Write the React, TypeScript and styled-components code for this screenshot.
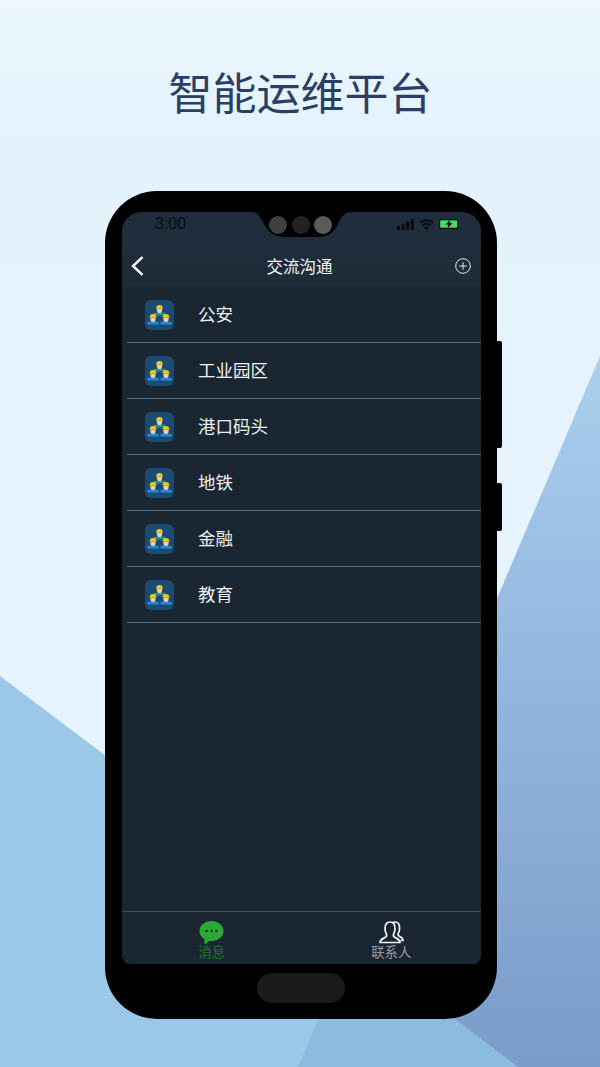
import React from 'react';
import styled, { createGlobalStyle } from 'styled-components';

const GlobalStyle = createGlobalStyle`
  html, body {
    margin: 0;
    padding: 0;
    background: #e8f4fd;
  }
  body {
    font-family: "Noto Sans CJK SC", "Noto Sans", sans-serif;
  }
`;

const Page = styled.div`
  position: relative;
  width: 600px;
  height: 1067px;
  overflow: hidden;
  display: flex;
  flex-direction: column;
  align-items: center;
  background: linear-gradient(180deg, #ecf7fe 0%, #e3f2fc 14%, #e8f4fd 60%);
`;

const RightSlope = styled.div`
  position: absolute;
  inset: 0;
  clip-path: polygon(600px 356px, 298px 1067px, 600px 1067px);
  background: linear-gradient(180deg, #a9d0ee 356px, #98bce2 600px, #7b9bc9 1067px);
`;

const LeftSlope = styled.div`
  position: absolute;
  inset: 0;
  clip-path: polygon(0 676px, 518px 1067px, 0 1067px);
  background: #9bc8e8;
`;

const SlopeOverlap = styled.div`
  position: absolute;
  inset: 0;
  clip-path: polygon(351px 940px, 298px 1067px, 518px 1067px);
  background: #8bbce0;
`;

const Title = styled.h1`
  position: relative;
  margin: 0 0 0 1px;
  padding-top: 59px;
  height: 191px;
  box-sizing: border-box;
  font-size: 44px;
  line-height: 64px;
  font-weight: 400;
  color: #2a3e66;
`;

const Phone = styled.div`
  position: relative;
  width: 392px;
  height: 828px;
  margin-left: 2px;
  box-sizing: border-box;
  padding: 21px 16px 55px 17px;
  background: #000;
  border-radius: 52px;
`;

const SideButton = styled.div<{ $top: number; $height: number }>`
  position: absolute;
  right: -5px;
  top: ${(p) => p.$top}px;
  width: 5px;
  height: ${(p) => p.$height}px;
  background: #000;
  border-radius: 0 2px 2px 0;
`;

const HomeButton = styled.div`
  position: absolute;
  left: 152px;
  bottom: 16px;
  width: 88px;
  height: 30px;
  background: #1a1a1a;
  border-radius: 15px;
`;

const Screen = styled.div`
  position: relative;
  height: 100%;
  display: flex;
  flex-direction: column;
  overflow: hidden;
  background: #1a2732;
  border-radius: 20px 20px 8px 8px;
`;

const Notch = styled.svg`
  position: absolute;
  left: 130px;
  top: 0;
`;

const TopArea = styled.div`
  height: 75px;
  flex: none;
  display: flex;
  flex-direction: column;
  background: linear-gradient(180deg, #202d3c 0%, #1e2b39 100%);
`;

const StatusBar = styled.div`
  height: 24px;
  padding: 0 20px 0 33px;
  display: flex;
  align-items: center;
  justify-content: space-between;
`;

const Time = styled.span`
  font-family: "Liberation Sans", sans-serif;
  font-size: 16px;
  line-height: 22px;
  color: #0a0c10;
`;

const StatusIcons = styled.div`
  display: flex;
  align-items: center;
  gap: 5px;
`;

const NavBar = styled.div`
  flex: 1;
  display: flex;
  align-items: center;
  justify-content: space-between;
  padding: 8px 10px 0 9px;
`;

const NavTitle = styled.span`
  font-size: 16.5px;
  line-height: 22px;
  color: #f2f4f6;
`;

const GroupList = styled.div`
  flex: 1;
  display: flex;
  flex-direction: column;
  padding-left: 5px;
`;

const GroupRow = styled.div`
  height: 56px;
  box-sizing: border-box;
  display: flex;
  align-items: center;
  gap: 24px;
  padding-left: 18px;
  border-bottom: 1px solid #5f666d;
`;

const GroupName = styled.span`
  font-size: 17.5px;
  line-height: 22px;
  margin-top: -1px;
  color: #eef0f2;
`;

const TabBar = styled.div`
  height: 53px;
  flex: none;
  display: grid;
  grid-template-columns: 1fr 1fr;
  border-top: 1px solid #454c58;
  box-sizing: border-box;
`;

const Tab = styled.div`
  display: flex;
  flex-direction: column;
  align-items: center;
  padding-top: 9px;
`;

const TabLabel = styled.span<{ $active?: boolean }>`
  font-size: 13.3px;
  line-height: 15px;
  margin-top: -1px;
  color: ${(p) => (p.$active ? '#1f7a2c' : '#9a9da0')};
`;

const Worker = ({ x, y }: { x: number; y: number }) => (
  <g transform={`translate(${x} ${y})`}>
    <rect x="-5.5" y="7.8" width="11" height="2.6" rx="0.5" fill="#1f8ee0" />
    <path d="M-2.8 3.4h5.6l-.5 3.300-1 1.300h-2.600l-1-1.300z" fill="#e9cfa6" />
    <path d="M-3.400 3.600c0-2.500 1.400-3.600 3.400-3.600s3.400 1.100 3.400 3.600z" fill="#f6c91e" />
  </g>
);

const GroupIcon = () => (
  <svg width="29" height="30" viewBox="0 0 29 30">
    <rect width="29" height="30" rx="6" fill="#1c4a70" />
    <Worker x={14.5} y={5} />
    <Worker x={8} y={14} />
    <Worker x={21} y={14} />
  </svg>
);

const groups = ['公安', '工业园区', '港口码头', '地铁', '金融', '教育'];

export default function App() {
  return (
    <>
      <GlobalStyle />
      <Page>
        <RightSlope />
        <LeftSlope />
        <SlopeOverlap />
        <Title>智能运维平台</Title>
        <Phone>
          <SideButton $top={150} $height={107} />
          <SideButton $top={292} $height={48} />
          <Screen>
            <TopArea>
              <StatusBar>
                <Time>3:00</Time>
                <StatusIcons>
                  <svg width="17" height="11" viewBox="0 0 17 11">
                    <rect x="0" y="7" width="3" height="4" fill="#0a0c10" />
                    <rect x="4.6" y="5" width="3" height="6" fill="#0a0c10" />
                    <rect x="9.2" y="2.5" width="3" height="8.5" fill="#0a0c10" />
                    <rect x="13.8" y="0" width="3" height="11" fill="#0a0c10" />
                  </svg>
                  <svg width="15" height="11" viewBox="0 0 15 11" fill="none" stroke="#0a0c10" strokeWidth="2">
                    <path d="M1 3.800a9.400 9.400 0 0 1 13 0" />
                    <path d="M3.400 6.400a6 6 0 0 1 8.200 0" />
                    <path d="M7.500 11 5.200 8.500a3.400 3.400 0 0 1 4.600 0z" fill="#0a0c10" stroke="none" />
                  </svg>
                  <svg width="22" height="10" viewBox="0 0 22 10">
                    <rect x="0" y="0" width="19.5" height="10" rx="1.500" fill="#0a0c10" />
                    <rect x="1.200" y="1.200" width="17.100" height="7.600" rx="0.800" fill="#43dc66" />
                    <path d="M11.500.8 6.400 5.600h3l-1 3.600 5.200-5h-3z" fill="#0a0c10" />
                    <rect x="20" y="3.200" width="1.200" height="3.600" rx="0.600" fill="#2a3440" />
                  </svg>
                </StatusIcons>
              </StatusBar>
              <NavBar>
                <svg width="13" height="20" viewBox="0 0 13 20" fill="none" stroke="#fff" strokeWidth="2.400">
                  <path d="M11.500 1.200 2 10l9.500 8.800" />
                </svg>
                <NavTitle>交流沟通</NavTitle>
                <svg width="16" height="16" viewBox="0 0 16 16" fill="none" stroke="#e8eaec" strokeWidth="1">
                  <circle cx="8" cy="8" r="7.300" />
                  <path d="M8 4.200v7.600M4.200 8h7.600" />
                </svg>
              </NavBar>
            </TopArea>
            <GroupList>
              {groups.map((name) => (
                <GroupRow key={name}>
                  <GroupIcon />
                  <GroupName>{name}</GroupName>
                </GroupRow>
              ))}
            </GroupList>
            <TabBar>
              <Tab>
                <svg width="25" height="24" viewBox="0 0 25 24">
                  <path
                    d="M12.500 0C5.600 0 .5 4.400.5 10c0 3.500 2 6.500 5 8.300l-.1 5.200 5-3.600c.7.1 1.400.1 2.100.1 6.900 0 12-4.400 12-10S19.400 0 12.500 0z"
                    fill="#2aa838"
                  />
                  <circle cx="7.600" cy="10" r="1.200" fill="#0e2416" />
                  <circle cx="12.500" cy="10" r="1.200" fill="#0e2416" />
                  <circle cx="17.400" cy="10" r="1.200" fill="#0e2416" />
                </svg>
                <TabLabel $active>消息</TabLabel>
              </Tab>
              <Tab>
                <svg width="25" height="24" viewBox="0 0 25 24" fill="none" stroke="#f2f3f4" strokeWidth="1.700">
                  <path d="M1 21.500c0-3 2.400-3.600 5-5 1.600-.9 2-2 1.400-3.400C6.400 11.200 6 9.500 6 7.500 6 3.500 8 1 11 1s5 2.500 5 6.500c0 2-.4 3.700-1.400 5.600-.6 1.400-.2 2.500 1.400 3.400 2.600 1.400 5 2 5 5z" />
                  <path d="M14 1.400c.7-.3 1.300-.4 2-.4 3 0 4.600 2.500 4.600 6 0 2-.4 3.700-1.300 5.400-.6 1.400-.2 2.300 1.300 3.100 1.700.9 3.400 1.700 3.400 4h-2.500" />
                </svg>
                <TabLabel>联系人</TabLabel>
              </Tab>
            </TabBar>
            <Notch width="100" height="26" viewBox="0 0 100 26">
              <path d="M0 0C8 0 10 10 16 18Q22 25 33 25L66 25Q78 25 84 16C88 8 90 0 100 0z" fill="#000" />
              <circle cx="26" cy="13" r="9" fill="#3f3f3f" />
              <circle cx="49" cy="13" r="9" fill="#222" />
              <circle cx="71" cy="13" r="9" fill="#5a5a5a" />
            </Notch>
          </Screen>
          <HomeButton />
        </Phone>
      </Page>
    </>
  );
}
